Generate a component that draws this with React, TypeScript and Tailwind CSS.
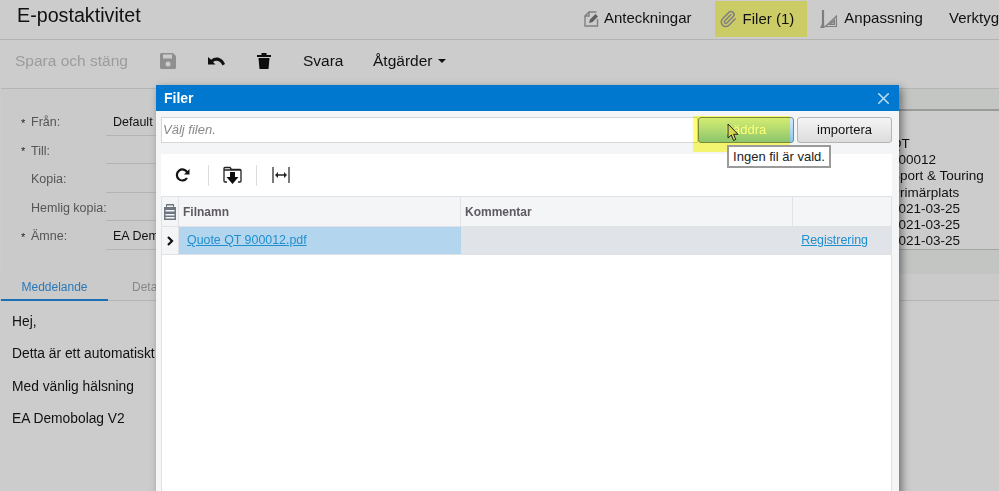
import { Paperclip, X } from "lucide-react";

const FORM_ROWS = [
  { label: "Från:", value: "Default", required: true },
  { label: "Till:", value: "", required: true },
  { label: "Kopia:", value: "", required: false },
  { label: "Hemlig kopia:", value: "", required: false },
  { label: "Ämne:", value: "EA Demobolag V2", required: true },
];

const SIDE_VALUES = ["QT", "900012", "Sport & Touring", "Primärplats", "2021-03-25", "2021-03-25", "2021-03-25"];

const BODY_LINES = [
  "Hej,",
  "Detta är ett automatiskt genererat meddelande, vänligen svara inte på detta meddelande. Kontakta oss gärna på annat sätt.",
  "Med vänlig hälsning",
  "EA Demobolag V2",
];

const NotesIcon = () => (
  <svg width="15" height="16" viewBox="0 0 15 16" fill="none" stroke="#808080" strokeWidth="1.400">
    <path d="M5 1h7.500M1 5l4-4v4zM1 5v10h12.500V8" />
    <path d="M5 12l1-3.500L11.500 3l2.500 2.500L8.500 11z" fill="#5f5f5f" stroke="none" />
  </svg>
);

const RulerIcon = () => (
  <svg width="17" height="18" viewBox="0 0 17 18" fill="none" stroke="#7d7d7d" strokeWidth="1.200">
    <path d="M2.500 0v14l-1.500 3.500h3L3.500 14V0z" fill="#8a8a8a" />
    <path d="M5.500 16.500h11V6z" />
    <path d="M9.500 14.500h5V10z" fill="#a5a5a5" />
  </svg>
);

const SaveIcon = () => (
  <svg width="16" height="16" viewBox="0 0 16 16">
    <path d="M1.500 0H13l3 3v11.500a1.500 1.500 0 0 1-1.500 1.500h-13A1.500 1.500 0 0 1 0 14.500v-13A1.500 1.500 0 0 1 1.500 0z" fill="#8f8f8f" />
    <rect x="3" y="1.500" width="9" height="4" fill="#cccccc" />
    <circle cx="8" cy="11" r="2.500" fill="#cccccc" />
  </svg>
);

const UndoIcon = () => (
  <svg width="17" height="10" viewBox="0 0 17 10">
    <path d="M0 1v7.500h7.500L5 6c3-2.200 7-1.500 9.500 3.500L17 8C14.500 1.500 8 -0.500 3.200 3.700z" fill="#111" />
  </svg>
);

const TrashIcon = () => (
  <svg width="14" height="16" viewBox="0 0 14 16">
    <path d="M0 2h4.500V0h5v2H14v2H0zM1.500 5h11l-1 11h-9z" fill="#0d0d0d" />
  </svg>
);

const RefreshIcon = () => (
  <svg width="15" height="15" viewBox="0 0 15 15" fill="none">
    <path d="M12 10a5.500 5.500 0 1 1 .3-5.500" stroke="#111" strokeWidth="2.200" />
    <path d="M14.500 1v5.500H9z" fill="#111" />
  </svg>
);

const ImportIcon = () => (
  <svg width="19" height="19" viewBox="0 0 19 19" fill="none">
    <path d="M1 4V2.500A1 1 0 0 1 2 1.500h5l1.500 2h8.500a1 1 0 0 1 1 1V15a1 1 0 0 1-1 1h-2M4 16H2a1 1 0 0 1-1-1V4h17" stroke="#222" strokeWidth="1.300" />
    <path d="M7 6h5v5h3.500l-6 7-6-7H7z" fill="#0d0d0d" />
  </svg>
);

const FitIcon = () => (
  <svg width="18" height="16" viewBox="0 0 18 16" fill="none" stroke="#222">
    <path d="M1 0v16M17 0v16" strokeWidth="1.200" />
    <path d="M4 8h10" strokeWidth="1.500" />
    <path d="M3 8l3-3v6zM15 8l-3-3v6z" fill="#222" stroke="none" />
  </svg>
);

const ColumnsIcon = () => (
  <svg width="12" height="16" viewBox="0 0 12 16">
    <path d="M2 0h8v3h2v13H0V3h2z" fill="#6f7680" />
    <path d="M3 1.500h6V3H3zM1.500 6h9v1.500h-9zM1.500 10h9v1.500h-9zM1.500 13h9v1.500h-9z" fill="#f3f5f7" />
  </svg>
);

const CursorIcon = () => (
  <svg width="12" height="19" viewBox="0 0 12 19">
    <path d="M1 1v14l3.300-3 2.200 5.500 2.300-1-2.200-5.200h4.400z" fill="#d8d850" stroke="#222" strokeWidth="1" />
  </svg>
);

const FilesDialog = () => (
  <div className="absolute left-[156px] top-[85px] w-[743px] h-[420px] flex flex-col bg-[#f3f5f7] shadow-[3px_3px_8px_rgba(0,0,0,0.45)]">
    <div className="h-[26px] shrink-0 flex items-center justify-between pl-2 pr-[6px] bg-[#0078cf] text-white">
      <span className="text-[14px] font-bold">Filer</span>
      <X size={19} strokeWidth={2} className="text-[#b9dcf3]" />
    </div>
    <div className="flex-1 flex flex-col pl-[5px] pr-[7px] pt-[6px]">
      <div className="h-[26px] shrink-0 flex gap-[3px]">
        <div className="w-[537px] -mr-[3px] h-full flex items-center pl-[1px] bg-white border border-[#d4d6d9] text-[13px] italic text-[#8a8a8a]">
          Välj filen.
        </div>
        <button className="w-[96px] h-full rounded-[3px] border border-[#7a8a7a] bg-gradient-to-b from-[#d4ecf8] to-[#8cc6ec] text-[13px] text-white">
          Läddra
        </button>
        <button className="w-[95px] h-full rounded-[3px] border border-[#b5b5b5] bg-gradient-to-b from-[#f5f5f5] to-[#dcdcdc] text-[13px] text-[#111]">
          importera
        </button>
      </div>
      <div className="h-[42px] mt-[11px] shrink-0 flex items-center bg-white">
        <div className="w-[47px] flex justify-center pr-[5px]"><RefreshIcon /></div>
        <div className="w-px h-[21px] bg-[#dcdcdc]" />
        <div className="w-[47px] flex justify-center"><ImportIcon /></div>
        <div className="w-px h-[21px] bg-[#dcdcdc]" />
        <div className="w-[47px] flex justify-center"><FitIcon /></div>
      </div>
      <div className="flex-1 flex flex-col bg-white border-x border-[#e0e2e5]">
        <div className="h-[31px] shrink-0 flex border-y border-[#e0e2e5] bg-[#f3f5f7] text-[12px] font-bold text-[#5f5a60]">
          <div className="w-[17px] flex items-center justify-center border-r border-[#e0e2e5]"><ColumnsIcon /></div>
          <div className="w-[282px] flex items-center pl-[4px] border-r border-[#e0e2e5]">Filnamn</div>
          <div className="w-[332px] flex items-center pl-[4px] border-r border-[#e0e2e5]">Kommentar</div>
          <div className="flex-1" />
        </div>
        <div className="h-[28px] shrink-0 flex items-center bg-[#e0e3e7] border-b border-[#e0e2e5] text-[12.400px] text-[#1f8fd0]">
          <div className="w-[17px] h-full flex items-center justify-center bg-[#f3f5f7] border-r border-[#e0e2e5] text-[#111]">
            <svg width="7" height="10" viewBox="0 0 7 10" fill="none" stroke="#111" strokeWidth="2.200"><path d="M1 1l4 4-4 4" /></svg>
          </div>
          <div className="w-[282px] h-full flex items-center pl-[8px] bg-[#b3d6ee]">
            <span className="underline">Quote QT 900012.pdf</span>
          </div>
          <div className="flex-1" />
          <span className="underline mr-[23px]">Registrering</span>
        </div>
      </div>
    </div>
    {/* highlight marker + tooltip + mouse pointer on top of the button row */}
    <div className="absolute left-[537px] top-[31px] w-[97px] h-[36px] bg-[#ffff75] mix-blend-multiply pointer-events-none" />
    <div className="absolute left-[571px] top-[38px]"><CursorIcon /></div>
    <div className="absolute left-[571px] top-[60px] w-[104px] h-[23px] flex items-center justify-center bg-white border-2 border-[#9a9a9a] text-[13px] text-[#222] whitespace-nowrap">
      Ingen fil är vald.
    </div>
  </div>
);

export default function App() {
  return (
    <div className="relative w-[999px] h-[491px] overflow-hidden bg-[#cccccc] font-['Liberation_Sans',Arial,sans-serif] text-[#111]">
      <header className="h-[40px] flex items-start justify-between border-b border-[#b4b4b4] overflow-hidden">
        <h1 className="pl-[17px] pt-[3px] text-[19.700px] leading-[24px]">E-postaktivitet</h1>
        <nav className="w-[415px] shrink-0 flex items-center text-[15px] whitespace-nowrap">
          <div className="flex items-center gap-[5px] w-[131px]"><NotesIcon />Anteckningar</div>
          <div className="mr-[13px] w-[93px] h-[36px] mt-px pl-[4px] flex items-center gap-[6px] bg-[#cccc66]">
            <Paperclip size={18} className="text-[#808080]" />
            Filer (1)
          </div>
          <div className="flex items-center gap-[7px] w-[129px]"><RulerIcon />Anpassning</div>
          <div>Verktyg</div>
        </nav>
      </header>

      <div className="h-[48px] flex items-center pl-[15px] pb-[6px] text-[15.500px] leading-none">
        <span className="text-[#9c9c9c] w-[145px]">Spara och stäng</span>
        <div className="w-[48px]"><SaveIcon /></div>
        <div className="w-[49px]"><UndoIcon /></div>
        <div className="w-[46px]"><TrashIcon /></div>
        <span className="w-[70px]">Svara</span>
        <span className="flex items-center gap-[6px]">
          Åtgärder
          <span className="w-0 h-0 border-x-[4px] border-x-transparent border-t-[4px] border-t-[#111]" />
        </span>
      </div>

      <section className="h-[186px] ml-px flex justify-between border-t border-[#b4b4b4] bg-[#c9cac9] text-[12.500px]">
        <div className="pt-[21px] flex flex-col gap-[3px] w-[260px]">
          {FORM_ROWS.map((row) => (
            <div key={row.label} className="h-[25.500px] flex items-center whitespace-nowrap">
              <span className="w-[30px] pl-[20px] text-[#222] text-[11px]">{row.required ? "*" : ""}</span>
              <span className="w-[75px] text-[#555]">{row.label}</span>
              <div className="flex-1 h-full flex items-center border-b border-[#b4b4b4] text-[#111] pl-[7px] overflow-hidden">
                {row.value}
              </div>
            </div>
          ))}
        </div>
        <div className="w-[108px] flex flex-col text-[#111] text-[13.500px] leading-[16.200px] whitespace-nowrap">
          <div className="h-[22px] shrink-0 border-b-2 border-[#9a9a9a] bg-[#c4c6c4]" />
          <div className="h-[139px] shrink-0 pt-[25px] border-b border-[#a5a5a5] bg-[#cccccc]">
            {SIDE_VALUES.map((value, i) => (
              <div key={i}>{value}</div>
            ))}
          </div>
          <div className="flex-1 bg-[#c3c5c3]" />
        </div>
      </section>

      <div className="h-[27px] flex items-end border-b border-[#b4b4b4] bg-[#c9cac9] text-[12px] text-[#888]">
        <div className="w-[107px] h-[27px] ml-px flex items-center justify-center border-b-2 border-[#1b6fb5] text-[#2b77ba] -mb-px">Meddelande</div>
        <div className="h-[27px] pl-[24px] flex items-center">Detaljer</div>
      </div>

      <div className="pl-[12px] pt-[13px] flex flex-col gap-[16px] text-[13.800px] leading-[16.300px] whitespace-nowrap">
        {BODY_LINES.map((line) => (
          <p key={line}>{line}</p>
        ))}
      </div>

      <FilesDialog />
    </div>
  );
}
